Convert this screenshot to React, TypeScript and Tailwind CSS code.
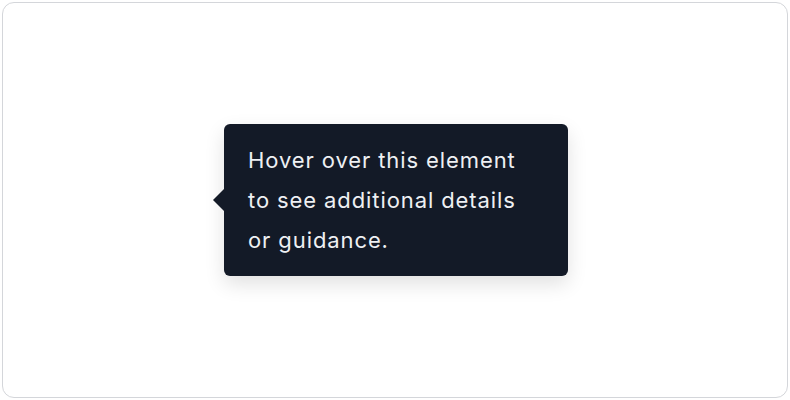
export default function App() {
  return (
    <div className="w-[790px] h-[400px] bg-white p-[2px]" style={{ fontFamily: 'Inter, "Noto Sans", sans-serif' }}>
      <div className="w-full h-full rounded-[12px] border border-[#d4d6da] bg-white flex items-center justify-center">
        <div className="relative ml-[2px] rounded-[6px] bg-[#131a27] px-6 py-4 shadow-[0_8px_20px_rgba(0,0,0,0.12)]">
          <div className="absolute left-[-11px] top-1/2 -translate-y-1/2 w-0 h-0 border-y-[11px] border-y-transparent border-r-[11px] border-r-[#131a27]" />
          <p className="text-[22px] leading-[40px] tracking-[0.9px] text-[#eef0f3] w-[296px] whitespace-nowrap">
            Hover over this element
            <br />
            to see additional details
            <br />
            or guidance.
          </p>
        </div>
      </div>
    </div>
  );
}
